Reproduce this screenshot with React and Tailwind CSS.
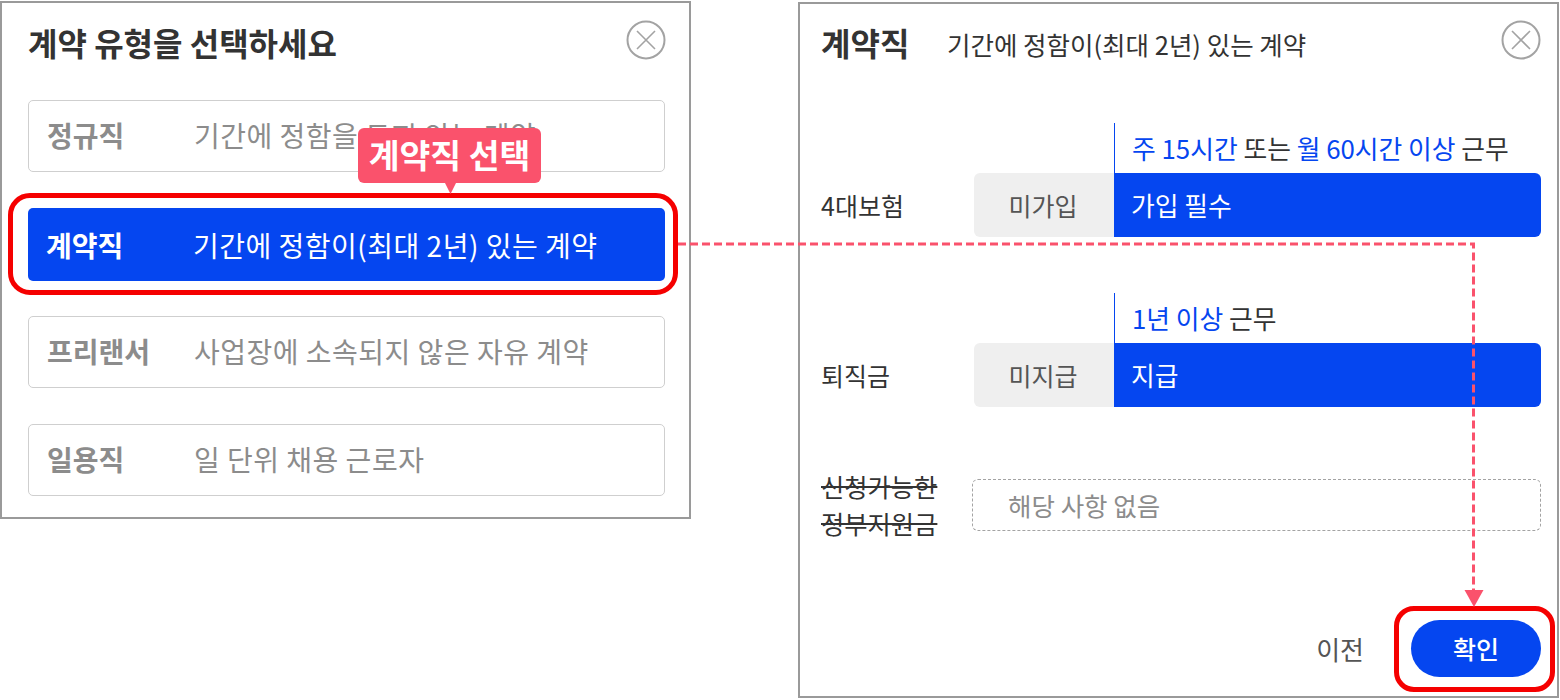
const FONT = "font-['Noto_Sans_CJK_KR','Noto_Sans',sans-serif]";

function CloseIcon() {
  return (
    <svg width="40" height="40" viewBox="0 0 40 40" fill="none" stroke="#a3a3a3" strokeWidth="2">
      <circle cx="20" cy="20" r="18.5" />
      <path d="M11 11 29 29M29 11 11 29" strokeWidth="1.6" />
    </svg>
  );
}

function Option({ name, desc, active }) {
  return (
    <div className={active
      ? "-mb-px flex h-[73px] items-center rounded-[5px] bg-[#0546f0] pl-[18px] text-white"
      : "flex h-[72px] items-center rounded-[5px] border border-[#cfcfcf] bg-white pb-[2px] pl-[18px] text-[#8c8c8c]"}>
      <span className="w-[147px] text-[28px] font-bold">{name}</span>
      <span className="text-[28px] tracking-[0.5px]">{desc}</span>
    </div>
  );
}

function Row({ label, note, off, on }) {
  return (
    <div className="flex flex-col">
      <div className="ml-[293px] h-[50px] border-l border-[#0546f0] pl-[17px] pt-[7px] text-[25.8px] leading-[36px] text-[#333]">{note}</div>
      <div className="flex h-[64px] items-center">
        <span className="w-[153px] pt-[1px] text-[25px] text-[#333]">{label}</span>
        <div className="flex h-full w-[140px] items-center justify-center rounded-l-[6px] bg-[#efefef] pr-[2px] pt-[1px] text-[25px] text-[#555]">{off}</div>
        <div className="flex h-full w-[427px] items-center rounded-r-[6px] bg-[#0546f0] pl-[17px] pt-[1px] text-[25.8px] text-white">{on}</div>
      </div>
    </div>
  );
}

export default function App() {
  return (
    <div className={`relative flex h-[700px] w-[1560px] items-start overflow-hidden bg-white pt-[1px] ${FONT}`}>
      <section className="h-[518px] w-[691px] border-2 border-[#9a9a9a] pl-[26px] pr-[24px]">
        <div className="-mr-px flex h-[97px] items-start justify-between">
          <h1 className="pt-[19px] text-[32px] leading-[40px] font-bold text-[#333]">계약 유형을 선택하세요</h1>
          <span className="mt-[17px]"><CloseIcon /></span>
        </div>
        <div className="flex flex-col gap-[36px]">
          <Option name="정규직" desc="기간에 정함을 두지 않는 계약" />
          <Option name="계약직" desc="기간에 정함이(최대 2년) 있는 계약" active />
          <Option name="프리랜서" desc="사업장에 소속되지 않은 자유 계약" />
          <Option name="일용직" desc="일 단위 채용 근로자" />
        </div>
      </section>

      <section className="ml-[107px] mt-[1px] h-[696px] w-[761px] border-2 border-[#9a9a9a] pl-[21px] pr-[16px]">
        <div className="flex h-[83px] items-start">
          <h2 className="w-[126px] pt-[18px] text-[32px] leading-[40px] font-bold text-[#333]">계약직</h2>
          <p className="pt-[20px] text-[25.5px] leading-[40px] text-[#333]">기간에 정함이(최대 2년) 있는 계약</p>
          <span className="ml-auto mt-[16px]"><CloseIcon /></span>
        </div>
        <div className="mt-[36px] flex flex-col gap-[56px]">
          <Row label="4대보험" off="미가입" on="가입 필수"
            note={<><span className="text-[#0546f0]">주 15시간</span> 또는 <span className="text-[#0546f0]">월 60시간 이상</span> 근무</>} />
          <Row label="퇴직금" off="미지급" on="지급"
            note={<><span className="text-[#0546f0]">1년 이상</span> 근무</>} />
        </div>
        <div className="mt-[61px] flex items-start">
          <p className="w-[151px] text-[25.3px] leading-[37px] text-[#333] line-through">신청가능한<br />정부지원금</p>
          <div className="mt-[11px] flex h-[52px] w-[569px] items-center rounded-[6px] border border-dashed border-[#a3a3a3] pl-[35px] text-[25.5px] text-[#8c8c8c]">해당 사항 없음</div>
        </div>
        <div className="mt-[78px] flex items-center justify-end">
          <span className="text-[26px] text-[#555]">이전</span>
          <button className="ml-[47px] flex h-[57px] w-[130px] items-center justify-center rounded-full bg-[#0546f0] text-[25px] font-medium text-white">확인</button>
        </div>
      </section>

      {/* annotations */}
      <div className="pointer-events-none absolute left-[8px] top-[193px] h-[102px] w-[670px] rounded-[22px] border-[5px] border-[#f50000]" />
      <div className="pointer-events-none absolute left-[1394px] top-[606px] h-[86px] w-[161px] rounded-[20px] border-[5px] border-[#f50000]" />
      <div className="absolute left-[358px] top-[128px] flex h-[55px] w-[183px] items-center justify-center rounded-[6px] bg-[#fa526c] pb-[2px] text-[33.500px] font-bold text-white">계약직 선택</div>
      <svg className="absolute left-0 top-0" width="1560" height="700" fill="none">
        <path d="M445 183h11l-5.500 11z" fill="#fa526c" />
        <path d="M678 244H1473.500V590" stroke="#fa526c" strokeWidth="3" strokeDasharray="8 4" />
        <path d="M1464.500 590h19l-9.500 17z" fill="#fa526c" />
      </svg>
    </div>
  );
}
